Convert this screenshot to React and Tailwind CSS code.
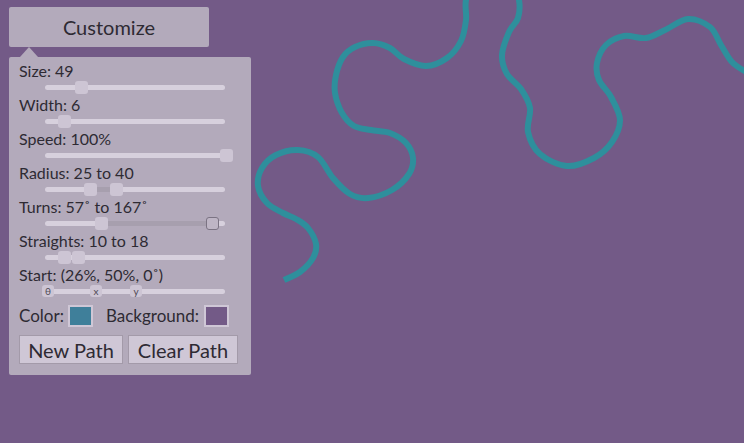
import React from 'react';

const font = { fontFamily: 'Lato, "Noto Sans", sans-serif' };

// wavy path traced from the picture, smoothed with catmull-rom
const pts = [
  [284, 280], [300, 272], [313, 258], [316, 244], [308, 228], [296, 219], [283, 213], [267, 203],
  [258, 186], [262, 168], [276, 155], [298, 150], [318, 157], [333, 178], [350, 194], [368, 198],
  [392, 190], [409, 174], [413, 158], [406, 143], [390, 133], [371, 130], [354, 126], [342, 113],
  [335, 93], [336, 75], [343, 57], [355, 47], [373, 43], [390, 48], [404, 59], [426, 66],
  [447, 58], [461, 41], [466, 20], [466, 0], [475, -20], [493, -28], [512, -18], [519, 0],
  [518, 18], [509, 32], [502, 55], [507, 74], [521, 89], [530, 108], [528, 132], [540, 154],
  [567, 166], [594, 158], [612, 142], [620, 120], [611, 97], [599, 80], [597, 63], [606, 45],
  [624, 36], [646, 38], [665, 30], [688, 19], [710, 27], [721, 45], [732, 62], [746, 72],
];

function smoothPath(p) {
  let d = `M${p[0][0]},${p[0][1]}`;
  for (let i = 0; i < p.length - 1; i++) {
    const p0 = p[i - 1] || p[i];
    const p1 = p[i];
    const p2 = p[i + 1];
    const p3 = p[i + 2] || p2;
    const c1 = [p1[0] + (p2[0] - p0[0]) / 6, p1[1] + (p2[1] - p0[1]) / 6];
    const c2 = [p2[0] - (p3[0] - p1[0]) / 6, p2[1] - (p3[1] - p1[1]) / 6];
    d += ` C${c1[0]},${c1[1]} ${c2[0]},${c2[1]} ${p2[0]},${p2[1]}`;
  }
  return d;
}

function Thumb({ left, focused, label, small }) {
  if (small) {
    return (
      <div
        className="absolute top-0 w-[12px] h-[12px] rounded-[3px] bg-[#cdc5d4] flex items-center justify-center text-[10px] leading-none text-[#4f4a55]"
        style={{ left }}
      >
        {label}
      </div>
    );
  }
  return (
    <div
      className={`absolute top-0 w-[13px] h-[13px] rounded-[3px] ${
        focused ? 'bg-[#beb5c5] border border-[#7b7383]' : 'bg-[#cdc5d4]'
      }`}
      style={{ left }}
    />
  );
}

function Slider({ thumbs, range, small }) {
  return (
    <div className="relative ml-[26px] w-[180px] h-[14px]">
      <div className="absolute left-0 right-0 top-[4px] h-[5px] rounded-full bg-[#d7d0dd]" />
      {range && (
        <div
          className="absolute top-[4px] h-[5px] bg-[#a79fae]"
          style={{ left: range[0], width: range[1] - range[0] }}
        />
      )}
      {thumbs.map((t, i) => (
        <Thumb key={i} {...t} small={small} />
      ))}
    </div>
  );
}

function Row({ label, children }) {
  return (
    <div>
      <div className="text-[16px] leading-[20px]">{label}</div>
      {children}
    </div>
  );
}

export default function App() {
  return (
    <div className="relative w-[744px] h-[443px] overflow-hidden bg-[#735a87] text-[#2e2a33]" style={font}>
      <svg className="absolute inset-0" width="744" height="443">
        <path d={smoothPath(pts)} fill="none" stroke="#2e8f9c" strokeWidth="6" strokeLinejoin="round" />
      </svg>

      <div className="relative pl-[9px] pt-[7px]">
        <button className="w-[200px] h-[40px] rounded-[2px] bg-[#b3aabb] text-[20px] text-[#2e2a33]">
          Customize
        </button>
        <div className="ml-[11px] w-0 h-0 border-x-[9px] border-x-transparent border-b-[10px] border-b-[#b3aabb]" />

        <div className="w-[242px] rounded-[2px] bg-[#b3aabb] pl-[10px] pr-[12px] pt-[4px] pb-[11px]">
          <Row label="Size: 49">
            <Slider thumbs={[{ left: 30 }]} />
          </Row>
          <Row label="Width: 6">
            <Slider thumbs={[{ left: 13 }]} />
          </Row>
          <Row label="Speed: 100%">
            <Slider thumbs={[{ left: 175 }]} />
          </Row>
          <Row label="Radius: 25 to 40">
            <Slider range={[45, 71]} thumbs={[{ left: 39 }, { left: 65 }]} />
          </Row>
          <Row label="Turns: 57˚ to 167˚">
            <Slider range={[56, 168]} thumbs={[{ left: 50 }, { left: 161, focused: true }]} />
          </Row>
          <Row label="Straights: 10 to 18">
            <Slider thumbs={[{ left: 13 }, { left: 27 }]} />
          </Row>
          <Row label="Start: (26%, 50%, 0˚)">
            <Slider
              small
              thumbs={[
                { left: -3, label: 'θ' },
                { left: 45, label: 'x' },
                { left: 85, label: 'y' },
              ]}
            />
          </Row>

          <div className="mt-[6px] flex items-center h-[22px] text-[17px]">
            <span>Color:</span>
            <div className="ml-[4px] w-[25px] h-[22px] border-2 border-[#cfc7d6] bg-[#3f7f9a]" />
            <span className="ml-[13px]">Background:</span>
            <div className="ml-[5px] w-[25px] h-[22px] border-2 border-[#cfc7d6] bg-[#735a87]" />
          </div>

          <div className="mt-[8px] flex gap-[5px]">
            <button className="w-[104px] h-[29px] bg-[#cfc7d6] border border-[#a39aa9] text-[20px] leading-none text-[#2e2a33]">
              New Path
            </button>
            <button className="w-[110px] h-[29px] bg-[#cfc7d6] border border-[#a39aa9] text-[20px] leading-none text-[#2e2a33]">
              Clear Path
            </button>
          </div>
        </div>
      </div>
    </div>
  );
}
